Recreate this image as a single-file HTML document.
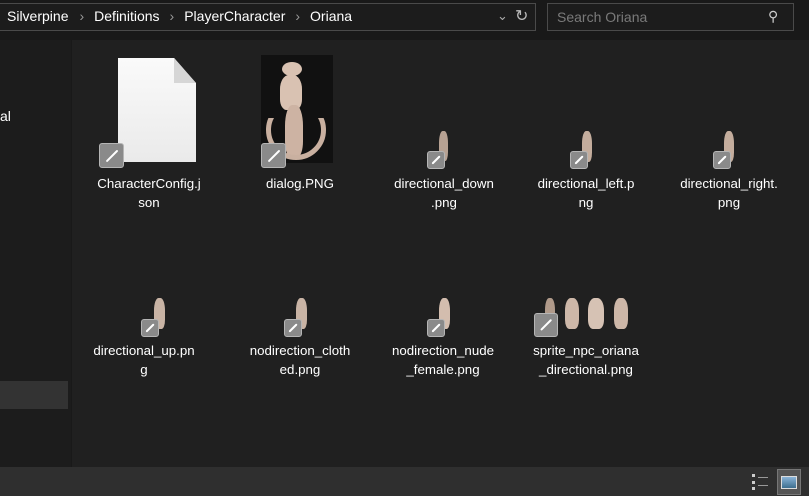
<!DOCTYPE html>
<html><head><style>
*{margin:0;padding:0;box-sizing:border-box}
body{width:809px;height:496px;background:#191919;font-family:"Liberation Sans",sans-serif;color:#fff;position:relative;overflow:hidden}
.a{position:absolute}
.lbl{position:absolute;width:130px;text-align:center;font-size:13.3px;line-height:19px;color:#fff}
.bd{position:absolute;background:#8a8a8a;border:1px solid #b5b5b5;border-radius:3px}
.bd:after{content:"";position:absolute;left:50%;top:50%;width:2px;height:70%;background:#fff;border-radius:1px;transform:translate(-50%,-50%) rotate(45deg)}
.fig{position:absolute;background:#d9c2b2;border-radius:40% 40% 30% 30%}
.sep{color:#999;margin:0 10px}
</style></head><body>
<div class="a" style="left:-2px;top:3px;width:538px;height:28px;border:1px solid #4a4a4a;background:#1c1c1c"></div>
<div class="a" style="left:7px;top:8px;font-size:14px;color:#fff;white-space:nowrap">Silverpine<span class="sep" style="margin-left:11px">›</span>Definitions<span class="sep">›</span>PlayerCharacter<span class="sep">›</span>Oriana</div>
<div class="a" style="left:497px;top:8px;font-size:13px;color:#aaa">⌄</div>
<div class="a" style="left:515px;top:6px;font-size:16px;color:#bbb">↻</div>
<div class="a" style="left:547px;top:3px;width:247px;height:28px;border:1px solid #4a4a4a;background:#1c1c1c"></div>
<div class="a" style="left:557px;top:9px;font-size:14px;color:#7a7a7a">Search Oriana</div>
<div class="a" style="left:768px;top:8px;font-size:14px;color:#ccc">⚲</div>
<div class="a" style="left:0;top:40px;width:71px;height:427px;background:#1c1c1c"></div>
<div class="a" style="left:0;top:108px;font-size:14px;color:#fff">al</div>
<div class="a" style="left:0;top:381px;width:68px;height:28px;background:#333"></div>
<div class="a" style="left:72px;top:40px;width:737px;height:427px;background:#202020"></div>
<div class="a" style="left:0;top:467px;width:809px;height:29px;background:#2f2f2f"></div>
<div class="a" style="left:752px;top:474px;width:16px;height:16px;border-left:3px dotted #ccc"></div>
<div class="a" style="left:758px;top:477px;width:10px;height:9px;border-top:1px solid #999;border-bottom:1px solid #999"></div>
<div class="a" style="left:777px;top:469px;width:24px;height:26px;background:#555;border:1px solid #777"></div>
<div class="a" style="left:781px;top:476px;width:16px;height:13px;background:linear-gradient(#8ab4d8,#3e6f8f);border:1px solid #ddd"></div>

<div class="a" style="left:118px;top:58px;width:78px;height:104px;background:linear-gradient(#fafafa,#eaeaea);clip-path:polygon(0 0,72% 0,100% 24%,100% 100%,0 100%)"></div>
<div class="a" style="left:174px;top:58px;width:22px;height:25px;background:#d6d6d6;clip-path:polygon(0 0,100% 100%,0 100%)"></div>
<div class="bd" style="left:99px;top:143px;width:25px;height:25px"></div>
<div class="lbl" style="left:84px;top:174px">CharacterConfig.j<br>son</div>

<div class="a" style="left:261px;top:55px;width:72px;height:108px;background:#111"></div>
<div class="fig" style="left:282px;top:62px;width:20px;height:14px;border-radius:50%"></div>
<div class="fig" style="left:280px;top:75px;width:22px;height:35px"></div>
<div class="fig" style="left:285px;top:105px;width:18px;height:52px;background:#cdb3a3"></div>
<div class="a" style="left:266px;top:100px;width:60px;height:60px;border:5px solid #c9b0a0;border-radius:50%;clip-path:inset(30% 0 0 0)"></div>
<div class="bd" style="left:261px;top:143px;width:25px;height:25px"></div>
<div class="lbl" style="left:235px;top:174px">dialog.PNG</div>

<div class="fig" style="left:439px;top:131px;width:9px;height:30px;background:#b7a293"></div>
<div class="bd" style="left:427px;top:151px;width:18px;height:18px"></div>
<div class="lbl" style="left:379px;top:174px">directional_down<br>.png</div>

<div class="fig" style="left:582px;top:131px;width:10px;height:31px;background:#c4ad9d"></div>
<div class="bd" style="left:570px;top:151px;width:18px;height:18px"></div>
<div class="lbl" style="left:521px;top:174px">directional_left.p<br>ng</div>

<div class="fig" style="left:724px;top:131px;width:10px;height:31px;background:#c4ad9d"></div>
<div class="bd" style="left:713px;top:151px;width:18px;height:18px"></div>
<div class="lbl" style="left:664px;top:174px">directional_right.<br>png</div>

<div class="fig" style="left:154px;top:298px;width:11px;height:31px;background:#c9b4a5"></div>
<div class="bd" style="left:141px;top:319px;width:18px;height:18px"></div>
<div class="lbl" style="left:79px;top:341px">directional_up.pn<br>g</div>

<div class="fig" style="left:296px;top:298px;width:11px;height:31px;background:#c9b4a5"></div>
<div class="bd" style="left:284px;top:319px;width:18px;height:18px"></div>
<div class="lbl" style="left:235px;top:341px">nodirection_cloth<br>ed.png</div>

<div class="fig" style="left:439px;top:298px;width:11px;height:31px;background:#d3bdae"></div>
<div class="bd" style="left:427px;top:319px;width:18px;height:18px"></div>
<div class="lbl" style="left:378px;top:341px">nodirection_nude<br>_female.png</div>

<div class="fig" style="left:545px;top:298px;width:10px;height:30px;background:#b09a8a"></div>
<div class="fig" style="left:565px;top:298px;width:14px;height:31px;background:#cdb7a8"></div>
<div class="fig" style="left:588px;top:298px;width:16px;height:31px;background:#d6c2b4"></div>
<div class="fig" style="left:614px;top:298px;width:14px;height:31px;background:#cdb7a8"></div>
<div class="bd" style="left:534px;top:313px;width:24px;height:24px"></div>
<div class="lbl" style="left:521px;top:341px">sprite_npc_oriana<br>_directional.png</div>
</body></html>
